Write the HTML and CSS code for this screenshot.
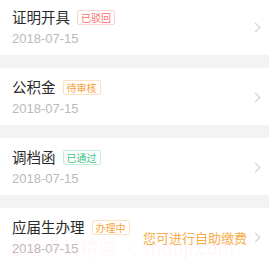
FILE: index.html
```html
<!DOCTYPE html>
<html lang="zh-CN">
  <head>
    <meta charset="UTF-8" />
    <meta name="viewport" content="width=device-width, initial-scale=1.0" />
    <title>我的办理</title>
    <link rel="stylesheet" href="styles.css">
  </head>
  <body>
    <ul class="list">
      <li class="item">
        <div class="info">
          <div class="title-row">
            <span class="title">证明开具</span>
            <span class="tag tag-red">已驳回</span>
          </div>
          <div class="date">2018-07-15</div>
        </div>
        <span class="arrow"></span>
      </li>
      <li class="item">
        <div class="info">
          <div class="title-row">
            <span class="title">公积金</span>
            <span class="tag tag-orange">待审核</span>
          </div>
          <div class="date">2018-07-15</div>
        </div>
        <span class="arrow"></span>
      </li>
      <li class="item">
        <div class="info">
          <div class="title-row">
            <span class="title">调档函</span>
            <span class="tag tag-green">已通过</span>
          </div>
          <div class="date">2018-07-15</div>
        </div>
        <span class="arrow"></span>
      </li>
      <li class="item">
        <div class="info">
          <div class="title-row">
            <span class="title">应届生办理</span>
            <span class="tag tag-orange">办理中</span>
          </div>
          <div class="date">2018-07-15</div>
        </div>
        <span class="tip">您可进行自助缴费</span>
        <span class="arrow"></span>
      </li>
    </ul>

    <!-- watermark from the screenshot -->
    <div class="watermark">必看手机精选 • shouji.com</div>
  </body>
</html>
```

FILE: styles.css
```css
body {
  margin: 0;
  padding: 0;
  background: #f3f3f3;
  font-family: "Noto Sans CJK SC", "Liberation Sans", sans-serif;
  overflow: hidden;
}

.list {
  list-style: none;
  margin: -2px 0 0 0;
  padding: 0;
}

.item {
  display: flex;
  align-items: center;
  height: 57px;
  background: #fff;
  padding: 2px 8px 0 12px;
  margin-bottom: 13px;
  box-sizing: border-box;
}

.info {
  flex: 1;
  display: flex;
  flex-direction: column;
}

.title-row {
  display: flex;
  align-items: center;
  gap: 7px;
}

.title {
  font-size: 14.5px;
  line-height: 20px;
  color: #2a2a2a;
}

.tag {
  font-size: 10px;
  line-height: 13px;
  padding: 0 3px;
  border: 1px solid;
  border-radius: 2px;
}
.tag-red {
  color: #ff6b6b;
  border-color: #ffd3d3;
}
.tag-orange {
  color: #f8a33c;
  border-color: #fde2bd;
}
.tag-green {
  color: #3ec38a;
  border-color: #c2eedc;
}

.date {
  margin-top: 3px;
  font-family: "Liberation Sans", sans-serif;
  font-size: 13px;
  line-height: 18px;
  color: #bababa;
}

.tip {
  font-size: 13px;
  color: #f9ac4a;
  margin-right: 5px;
}

/* thin chevron */
.arrow {
  width: 6px;
  height: 6px;
  border-top: 1px solid #cccccc;
  border-right: 1px solid #cccccc;
  transform: rotate(45deg);
  margin-right: 2px;
}

.watermark {
  position: absolute;
  left: 8px;
  top: 234px;
  font-size: 18px;
  color: rgba(255, 80, 190, 0.07);
  white-space: nowrap;
  pointer-events: none;
}
```
